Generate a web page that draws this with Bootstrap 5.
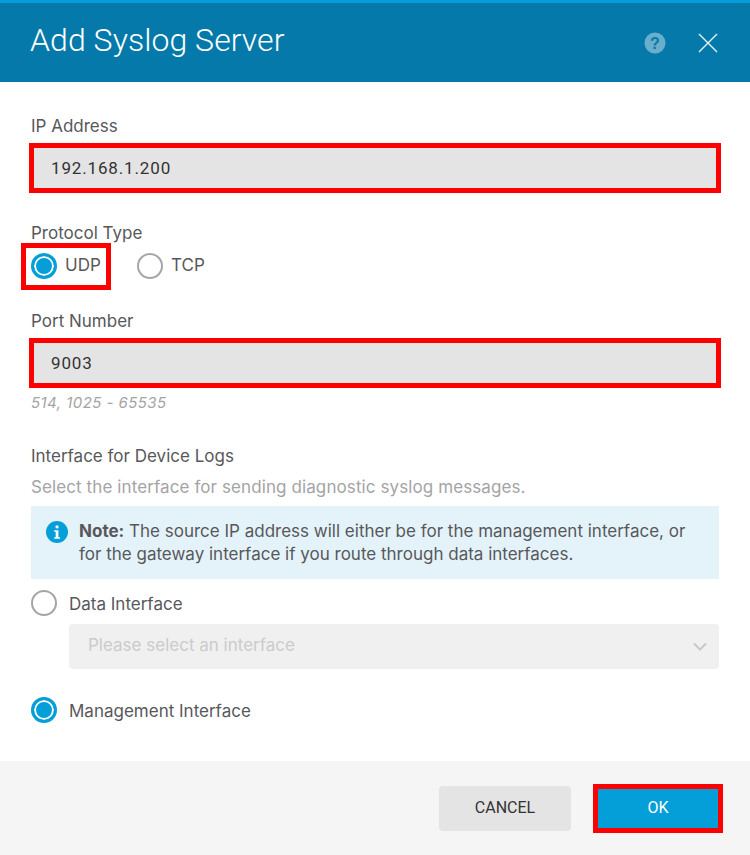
<!DOCTYPE html>
<html lang="en">
<head>
<meta charset="utf-8">
<title>Add Syslog Server</title>
<link href="https://cdn.jsdelivr.net/npm/bootstrap@5.3.0/dist/css/bootstrap.min.css" rel="stylesheet">
<style>
html, body { margin: 0; background: #fff; }
body { font-family: Inter, "Liberation Sans", Arial, sans-serif; font-size: 17px; font-weight: 400; color: #58585b; width: 750px; height: 855px; overflow: hidden; }
.dlg { height: 855px; }
.dlg-head { height: 82px; flex: none; background: #057aaa; border-top: 3px solid #069cd7; padding: 0 32px 0 30px; }
.dlg-title { font-family: Roboto, sans-serif; font-weight: 300; font-size: 32px; letter-spacing: .06px; color: #fff; margin: 0; line-height: 1; padding-bottom: 5px; }
.head-icons { gap: 32px; padding-top: 1px; }
.dlg-body { padding: 34px 31px 0; flex: 1 1 auto; }
.fld-label { display: block; font-size: 17px; line-height: 20px; margin: 0; }
.redbox.form-control { display: block; width: calc(100% + 4px); margin: 7px -2px 0; height: 50px; border: 5px solid #f00; border-radius: 0; background: #e4e4e4; font-family: Roboto, sans-serif; font-size: 17px; letter-spacing: .85px; color: #333; padding: 0 17px; box-shadow: none; }
.proto-label { margin-top: 30px; }
.proto-row { margin-top: -2px; height: 50px; align-items: center; }
.radio-hl { border: 5px solid #f00; height: 47px; width: 90px; margin-left: -10px; padding-left: 5px; }
.tcp-wrap { margin-left: 26px; }
.form-check-input.rad { width: 26px; height: 26px; margin: 0; flex: none; float: none; border: 2px solid #a5a5a5; background-color: #fff; background-image: none; box-shadow: none; }
.form-check-input.rad:checked { border: 3px solid #049fd9; background-color: #049fd9; background-image: none; box-shadow: inset 0 0 0 2px #fff; opacity: 1; }
.rad-text { font-size: 17px; margin: 0 0 0 8px; }
.port-label { margin-top: 20px; }
.hint { font-size: 15px; letter-spacing: .45px; font-style: italic; color: #a4a4a6; line-height: 18px; margin-top: 6px; }
.if-title { margin-top: 34px; }
.sub { font-size: 17px; letter-spacing: .1px; color: #a4a4a6; line-height: 20px; margin-top: 11px; }
.note { background: #e4f3fa; height: 73px; margin: 9px 0 0; padding: 14px 15px; gap: 11px; font-size: 17px; line-height: 23px; color: #58585b; border: 0; border-radius: 0; }
.note svg { flex: none; margin-top: 1px; }
.iface-row { gap: 12px; align-items: center; height: 26px; }
.iface-row .rad-text { margin-left: 0; line-height: 22px; padding-top: 2px; }
.data-row { margin-top: 11px; }
.iface-sel.form-select { width: 650px; height: 45px; margin: 8px 0 0 38px; border: 0; border-radius: 4px; background-color: #f0f0f0; color: #cbcbcb; font-size: 17px; padding: 0 18px 2px 19px; background-position: right 11px center; background-size: 16px 10px; background-image: url("data:image/svg+xml,%3csvg xmlns='http://www.w3.org/2000/svg' viewBox='0 0 16 10'%3e%3cpath fill='none' stroke='%23c8c8c8' stroke-width='2' d='M2 1.5l6 6 6-6'/%3e%3c/svg%3e"); opacity: 1; }
.mgmt-row { margin-top: 28px; }
.dlg-foot { height: 94px; background: #f5f5f5; padding: 0 27px 0 0; gap: 22px; flex: none; }
.btn.foot-cancel { width: 132px; height: 45px; background: #e4e4e4; border: 0; border-radius: 4px; color: #333; font-family: Roboto, sans-serif; font-size: 16px; padding: 0; }
.btn.foot-ok { width: 130px; height: 49px; background: #049fd9; border: 5px solid #f00; border-radius: 0; color: #fff; font-family: Roboto, sans-serif; font-size: 16px; padding: 0; }
</style>
</head>
<body>
<div class="dlg d-flex flex-column">
  <header class="dlg-head d-flex align-items-center justify-content-between">
    <h1 class="dlg-title">Add Syslog Server</h1>
    <div class="head-icons d-flex align-items-center">
      <svg width="22" height="22" viewBox="0 0 22 22" aria-label="Help"><circle cx="11" cy="11" r="10.5" fill="#69aeca"/><text x="11" y="16.5" text-anchor="middle" font-family="Liberation Sans, sans-serif" font-weight="700" font-size="16" fill="#057aaa">?</text></svg>
      <svg width="20" height="20" viewBox="0 0 20 20" aria-label="Close"><path d="M1 1l18 18M19 1L1 19" stroke="#e8f3f8" stroke-width="1.4" fill="none"/></svg>
    </div>
  </header>
  <main class="dlg-body">
    <label class="fld-label" for="ip">IP Address</label>
    <input id="ip" class="form-control redbox" type="text" value="192.168.1.200">

    <label class="fld-label proto-label">Protocol Type</label>
    <div class="d-flex proto-row">
      <div class="radio-hl d-flex align-items-center">
        <input class="form-check-input rad" type="radio" name="proto" checked>
        <span class="rad-text">UDP</span>
      </div>
      <div class="d-flex align-items-center tcp-wrap">
        <input class="form-check-input rad" type="radio" name="proto">
        <span class="rad-text">TCP</span>
      </div>
    </div>

    <label class="fld-label port-label" for="port">Port Number</label>
    <input id="port" class="form-control redbox" type="text" value="9003">
    <div class="hint">514, 1025 - 65535</div>

    <div class="fld-label if-title">Interface for Device Logs</div>
    <div class="sub">Select the interface for sending diagnostic syslog messages.</div>
    <div class="note alert d-flex" role="alert">
      <svg width="22" height="22" viewBox="0 0 22 22"><circle cx="11" cy="11" r="11" fill="#049fd9"/><rect x="9.6" y="4.5" width="2.8" height="2.8" fill="#fff"/><path d="M8.2 9.2h4.2v7h1.6v1.6H8.2v-1.6h1.5v-5.4H8.2z" fill="#fff"/></svg>
      <div><b>Note:</b> The source IP address will either be for the management interface, or for the gateway interface if you route through data interfaces.</div>
    </div>

    <div class="d-flex iface-row data-row">
      <input class="form-check-input rad" type="radio" name="iface">
      <span class="rad-text">Data Interface</span>
    </div>
    <select class="form-select iface-sel" disabled><option>Please select an interface</option></select>
    <div class="d-flex iface-row mgmt-row">
      <input class="form-check-input rad" type="radio" name="iface" checked>
      <span class="rad-text">Management Interface</span>
    </div>
  </main>
  <footer class="dlg-foot d-flex align-items-center justify-content-end">
    <button class="btn foot-cancel" type="button">CANCEL</button>
    <button class="btn foot-ok" type="button">OK</button>
  </footer>
</div>
<script src="https://cdn.jsdelivr.net/npm/bootstrap@5.3.0/dist/js/bootstrap.bundle.min.js"></script>
</body>
</html>
